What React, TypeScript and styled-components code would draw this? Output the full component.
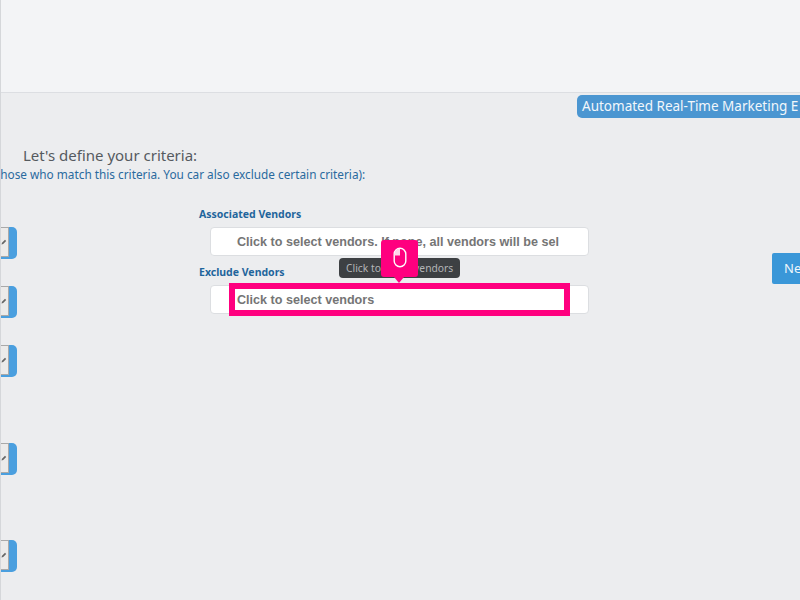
import React from "react";
import styled, { createGlobalStyle } from "styled-components";

const Global = createGlobalStyle`
  html, body { margin: 0; padding: 0; background: #ecedef; }
`;

const Stage = styled.div`
  position: relative;
  width: 800px;
  height: 600px;
  overflow: hidden;
  box-sizing: border-box;
  background: #ecedef;
  border-left: 1px solid #d5d7da;
  font-family: "Noto Sans", sans-serif;
`;

const Header = styled.header`
  height: 93px;
  box-sizing: border-box;
  background: #f3f4f6;
  border-bottom: 1px solid #dcdee2;
`;

const BannerRow = styled.div`
  display: flex;
  height: 23px;
  margin-top: 2px;
  padding-left: 576px;
`;

const Banner = styled.div`
  flex: 0 0 auto;
  width: 260px;
  height: 23px;
  box-sizing: border-box;
  padding-left: 5px;
  background: #4b96d1;
  border-radius: 5px;
  color: #f2f7fb;
  font-size: 13.5px;
  line-height: 22px;
  white-space: nowrap;
`;

const Title = styled.h2`
  margin: 27px 0 0 22px;
  color: #555a5f;
  font-size: 15px;
  font-weight: 400;
  line-height: 20px;
  white-space: nowrap;
`;

const Subtitle = styled.p`
  margin: 1px 0 0 -5px;
  color: #2a6a9e;
  font-size: 11.8px;
  line-height: 16px;
  white-space: nowrap;
`;

const Body = styled.div`
  display: flex;
  margin-top: 25px;
`;

const ToggleColumn = styled.div`
  flex: 0 0 16px;
  display: flex;
  flex-direction: column;
  padding-top: 20px;
`;

const Toggle = styled.div<{ $gap: number }>`
  width: 16px;
  height: 32px;
  box-sizing: border-box;
  margin-top: ${(p) => p.$gap}px;
  background: #4a9fdf;
  border-radius: 0 5px 5px 0;
  overflow: hidden;
`;

const ToggleFace = styled.div`
  display: flex;
  align-items: center;
  width: 8px;
  height: 30px;
  box-sizing: border-box;
  background: #ecebea;
  border: 1px solid #a9a9a9;
  border-left: 0;
  svg { margin-left: 0; }
`;

const Form = styled.div`
  flex: 0 0 auto;
  margin-left: 182px;
`;

const FieldLabel = styled.label`
  display: block;
  color: #1f659c;
  font-size: 10.5px;
  font-weight: 700;
  line-height: 14px;
  white-space: nowrap;
`;

const FieldRow = styled.div`
  margin: 6px 0 9px 11px;
`;

const SelectBox = styled.div`
  width: 379px;
  height: 29px;
  box-sizing: border-box;
  background: #fff;
  border: 1px solid #dcdee1;
  border-radius: 4px;
  padding-left: 26px;
  color: #757575;
  font-family: "Liberation Sans", Arial, sans-serif;
  font-size: 12.6px;
  font-weight: 700;
  line-height: 28px;
  white-space: nowrap;
  overflow: hidden;
`;

const NextButton = styled.div`
  position: absolute;
  left: 771px;
  top: 253px;
  width: 40px;
  height: 31px;
  box-sizing: border-box;
  padding-left: 12px;
  background: #3a97d8;
  border-radius: 2px;
  color: #f0f6fb;
  font-size: 13px;
  line-height: 31px;
`;

const Tooltip = styled.div`
  position: absolute;
  left: 338px;
  top: 258px;
  width: 121px;
  height: 20px;
  box-sizing: border-box;
  padding-left: 7px;
  background: #3d4043;
  border-radius: 4px;
  color: #b3b5b7;
  font-size: 10.3px;
  line-height: 20px;
  white-space: nowrap;
`;

const Highlight = styled.div`
  position: absolute;
  left: 228px;
  top: 283px;
  width: 341px;
  height: 33px;
  box-sizing: border-box;
  border: 6px solid #ff007f;
`;

const Pin = styled.div`
  position: absolute;
  left: 380px;
  top: 240px;
  width: 37px;
  height: 37px;
  display: flex;
  align-items: center;
  justify-content: center;
  background: #ff007f;
  border-radius: 3px;
  padding-bottom: 2px;
  box-sizing: border-box;
  &::after {
    content: "";
    position: absolute;
    left: 13px;
    bottom: -6px;
    border-left: 5px solid transparent;
    border-right: 5px solid transparent;
    border-top: 6px solid #ff007f;
  }
`;

const gaps = [0, 27, 27, 66, 65];

export default function App() {
  return (
    <Stage>
      <Global />
      <Header />
      <BannerRow>
        <Banner>Automated Real-Time Marketing E</Banner>
      </BannerRow>
      <Title>Let's define your criteria:</Title>
      <Subtitle>those who match this criteria. You car also exclude certain criteria):</Subtitle>
      <Body>
        <ToggleColumn>
          {gaps.map((g, i) => (
            <Toggle key={i} $gap={g}>
              <ToggleFace>
                <svg width="6" height="6" viewBox="0 0 6 6">
                  <path d="M0.5 5.5 L1 3.8 L4 0.8 L5.2 2 L2.2 5 Z" fill="#666" />
                </svg>
              </ToggleFace>
            </Toggle>
          ))}
        </ToggleColumn>
        <Form>
          <FieldLabel>Associated Vendors</FieldLabel>
          <FieldRow>
            <SelectBox>Click to select vendors. If none, all vendors will be sel</SelectBox>
          </FieldRow>
          <FieldLabel>Exclude Vendors</FieldLabel>
          <FieldRow>
            <SelectBox>Click to select vendors</SelectBox>
          </FieldRow>
        </Form>
      </Body>
      <NextButton>Next</NextButton>
      <Tooltip>Click to select vendors</Tooltip>
      <Highlight />
      <Pin>
        <svg width="14" height="21" viewBox="0 0 14 21" fill="none">
          <rect x="1.2" y="1.2" width="11.6" height="18.6" rx="5.8" stroke="#fff" strokeWidth="1.4" />
          <path d="M7 1.5 V8.5 H1.5 V7 A5.5 5.5 0 0 1 7 1.5 Z" fill="#ffd5ea" />
        </svg>
      </Pin>
    </Stage>
  );
}
